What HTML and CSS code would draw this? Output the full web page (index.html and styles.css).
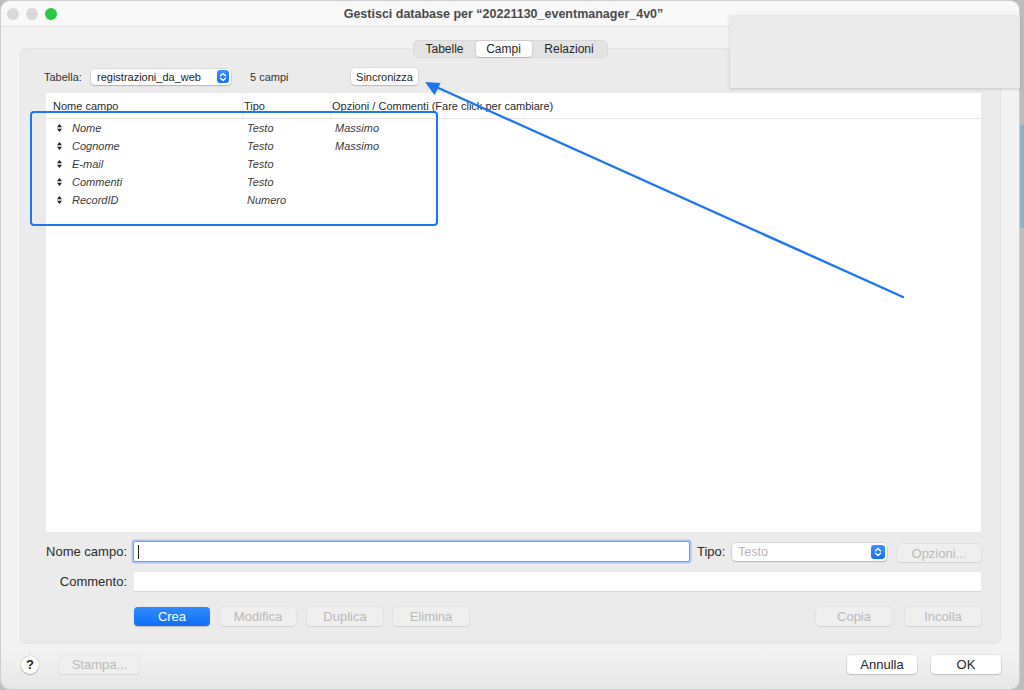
FILE: index.html
```html
<!DOCTYPE html>
<html lang="it">
<head>
<meta charset="utf-8">
<title>Gestisci database</title>
<link rel="stylesheet" href="styles.css">
</head>
<body>
<div class="window">
  <div class="titlebar">
    <div class="lights">
      <span class="light gray"></span>
      <span class="light gray"></span>
      <span class="light green"></span>
    </div>
    <div class="title">Gestisci database per “20221130_eventmanager_4v0”</div>
  </div>
  <div class="content">
    <div class="tabs">
      <span class="tab t1">Tabelle</span>
      <span class="tab t2 sel">Campi</span>
      <span class="tab t3">Relazioni</span>
    </div>
    <div class="panel">
      <div class="toolbar">
        <span class="tlabel">Tabella:</span>
        <div class="popup tpopup">
          <span class="ptext">registrazioni_da_web</span>
          <span class="stepper"><svg width="12" height="12" viewBox="0 0 12 12"><path d="M3.5 4.8 L6 2.5 L8.5 4.8 M3.5 7.2 L6 9.5 L8.5 7.2" fill="none" stroke="#fff" stroke-width="1.4" stroke-linecap="round" stroke-linejoin="round"/></svg></span>
        </div>
        <span class="count">5 campi</span>
        <span class="btn sync">Sincronizza</span>
      </div>
      <div class="table">
        <div class="thead">
          <span class="th c1">Nome campo</span>
          <span class="th c2">Tipo</span>
          <span class="th c3">Opzioni / Commenti (Fare click per cambiare)</span>
        </div>
        <div class="row"><span class="c1 cell"><svg class="grip" width="5" height="8" viewBox="0 0 5 8"><path d="M2.5 0 L5 3.2 L0 3.2 Z M0 4.8 L5 4.8 L2.5 8 Z" fill="#1e1e1e"/></svg>Nome</span><span class="c2 cell">Testo</span><span class="c3 cell">Massimo</span></div>
        <div class="row"><span class="c1 cell"><svg class="grip" width="5" height="8" viewBox="0 0 5 8"><path d="M2.5 0 L5 3.2 L0 3.2 Z M0 4.8 L5 4.8 L2.5 8 Z" fill="#1e1e1e"/></svg>Cognome</span><span class="c2 cell">Testo</span><span class="c3 cell">Massimo</span></div>
        <div class="row"><span class="c1 cell"><svg class="grip" width="5" height="8" viewBox="0 0 5 8"><path d="M2.5 0 L5 3.2 L0 3.2 Z M0 4.8 L5 4.8 L2.5 8 Z" fill="#1e1e1e"/></svg>E-mail</span><span class="c2 cell">Testo</span><span class="c3 cell"></span></div>
        <div class="row"><span class="c1 cell"><svg class="grip" width="5" height="8" viewBox="0 0 5 8"><path d="M2.5 0 L5 3.2 L0 3.2 Z M0 4.8 L5 4.8 L2.5 8 Z" fill="#1e1e1e"/></svg>Commenti</span><span class="c2 cell">Testo</span><span class="c3 cell"></span></div>
        <div class="row"><span class="c1 cell"><svg class="grip" width="5" height="8" viewBox="0 0 5 8"><path d="M2.5 0 L5 3.2 L0 3.2 Z M0 4.8 L5 4.8 L2.5 8 Z" fill="#1e1e1e"/></svg>RecordID</span><span class="c2 cell">Numero</span><span class="c3 cell"></span></div>
      </div>
      <div class="form">
        <span class="flabel">Nome campo:</span>
        <div class="frow">
          <div class="input focus"><span class="caret"></span></div>
          <span class="tipo">Tipo:</span>
          <div class="popup tipopop">
            <span class="ptext ph">Testo</span>
            <span class="stepper"><svg width="12" height="12" viewBox="0 0 12 12"><path d="M3.5 4.8 L6 2.5 L8.5 4.8 M3.5 7.2 L6 9.5 L8.5 7.2" fill="none" stroke="#fff" stroke-width="1.4" stroke-linecap="round" stroke-linejoin="round"/></svg></span>
          </div>
          <span class="btn dis opz">Opzioni...</span>
        </div>
        <span class="flabel">Commento:</span>
        <div class="frow"><div class="input plain"></div></div>
        <span></span>
        <div class="frow actions">
          <span class="btn primary b76">Crea</span>
          <span class="btn dis b76 m10">Modifica</span>
          <span class="btn dis b76 m11">Duplica</span>
          <span class="btn dis b76 m10">Elimina</span>
          <span class="spacer"></span>
          <span class="btn dis b76">Copia</span>
          <span class="btn dis b76 m13">Incolla</span>
        </div>
      </div>
    </div>
    <div class="footer">
      <span class="help">?</span>
      <span class="btn dis stampa">Stampa...</span>
      <span class="spacer"></span>
      <span class="btn b70">Annulla</span>
      <span class="btn b70 m14">OK</span>
    </div>
  </div>
</div>
<div class="redact"></div>
<svg class="annot" width="1024" height="690" viewBox="0 0 1024 690">
  <rect x="31" y="112" width="406" height="113" rx="3" fill="none" stroke="#1b76f2" stroke-width="2"/>
  <line x1="903" y1="297" x2="434" y2="86" stroke="#1b76f2" stroke-width="2.4" stroke-linecap="round"/>
  <path d="M425 82 L440.5 83 L434.6 95.2 Z" fill="#1b76f2"/>
</svg>
</body>
</html>
```

FILE: styles.css
```css
* { box-sizing: border-box; }
html, body { margin: 0; padding: 0; }
body {
  width: 1024px;
  height: 690px;
  overflow: hidden;
  position: relative;
  background: linear-gradient(#bdbdbd 0 125px, #8fb1c7 125px 228px, #bdbdbd 228px);
  font-family: "Liberation Sans", Arial, sans-serif;
  color: #2b2b2b;
}
.window {
  width: 1020px;
  height: 690px;
  border: 1px solid #cdcdcd;
  border-radius: 10px;
  background: linear-gradient(#f3f3f3 0 640px, #f0f0f0 660px, #e6e6e6 100%);
  overflow: hidden;
  display: flex;
  flex-direction: column;
}
.titlebar {
  height: 26px;
  flex: none;
  background: #f8f8f8;
  border-bottom: 1px solid #e0e0e0;
  display: flex;
  align-items: center;
  padding-left: 6px;
}
.lights { display: flex; gap: 7px; width: 57px; }
.light { width: 12px; height: 12px; border-radius: 50%; }
.light.gray { background: #d8d8d8; }
.light.green { background: #2ac840; }
.title {
  flex: 1;
  text-align: center;
  font-size: 12.5px;
  font-weight: bold;
  color: #4a4a4a;
  padding-right: 76px;
}
.content { flex: 1; display: flex; flex-direction: column; }
.tabs {
  align-self: center;
  margin-top: 13px;
  margin-bottom: -10px;
  height: 18px;
  display: flex;
  background: #e3e3e3;
  border: 1px solid #d9d9d9;
  border-radius: 5px;
  position: relative;
  z-index: 1;
  font-size: 12px;
  color: #262626;
}
.tab { display: flex; align-items: center; justify-content: center; height: 16px; }
.t1 { width: 62px; }
.t2 { width: 56px; }
.t3 { width: 75px; }
.tab.sel {
  background: #ffffff;
  border-radius: 4px;
  box-shadow: 0 0 0 0.5px rgba(0,0,0,0.12), 0 1px 1px rgba(0,0,0,0.12);
}
.panel {
  margin: 0 18px 0 19px;
  background: #ebebeb;
  border-radius: 6px;
  padding: 20px 19px 17px 25px;
  border: 1px solid #e4e4e4;
}
.toolbar {
  height: 17px;
  display: flex;
  align-items: center;
  font-size: 11px;
  margin-top: -1px;
}
.tlabel { width: 47px; margin-left: -2px; color: #333; }
.popup {
  height: 16px;
  background: #ffffff;
  border-radius: 4px;
  box-shadow: 0 0 0 0.5px rgba(0,0,0,0.14), 0 1px 1.5px rgba(0,0,0,0.18);
  display: flex;
  align-items: center;
  justify-content: space-between;
  padding: 0 2px 0 6px;
}
.tpopup { width: 140px; font-size: 11px; }
.ptext { color: #222; }
.stepper {
  width: 12px;
  height: 13px;
  border-radius: 3px;
  background: linear-gradient(#3c91fb, #1570f2);
  display: flex;
  align-items: center;
  justify-content: center;
}
.count { width: 120px; padding-left: 19px; color: #333; }
.btn {
  height: 17px;
  background: #ffffff;
  border-radius: 4px;
  box-shadow: 0 0 0 0.5px rgba(0,0,0,0.12), 0 1px 1.5px rgba(0,0,0,0.16);
  display: flex;
  align-items: center;
  justify-content: center;
  color: #262626;
  flex: none;
  white-space: nowrap;
}
.sync { width: 67px; font-size: 11px; }
.table {
  margin-top: 8px;
  height: 439px;
  background: #ffffff;
}
.thead {
  height: 26px;
  display: flex;
  align-items: stretch;
  border-bottom: 1px solid #e6e6e6;
  font-size: 11px;
  color: #2a2a2a;
}
.th { display: flex; align-items: center; }
.thead .c1 { width: 197px; padding-left: 7px; border-right: 1px solid #ececec; }
.thead .c2 { width: 88px; padding-left: 1px; border-right: 1px solid #ececec; }
.thead .c3 { flex: 1; padding-left: 1px; }
.row {
  height: 18px;
  display: flex;
  align-items: center;
  font-size: 11px;
  font-style: italic;
  color: #3a3a3a;
}
.row .c1 { width: 197px; padding-left: 11px; display: flex; align-items: center; }
.grip { margin-right: 10px; }
.row .c2 { width: 88px; padding-left: 4px; }
.row .c3 { flex: 1; padding-left: 4px; }
.form {
  margin-top: 9px;
  display: grid;
  grid-template-columns: 82px 1fr;
  column-gap: 5px;
  align-items: center;
}
.flabel {
  text-align: right;
  font-size: 13px;
  color: #2a2a2a;
  white-space: nowrap;
  padding-right: 1px;
}
.frow { display: flex; align-items: center; }
.form > :nth-child(1), .form > :nth-child(2) { height: 21px; line-height: 21px; }
.form > :nth-child(3), .form > :nth-child(4) { height: 20px; line-height: 20px; margin-top: 10px; }
.form > :nth-child(5), .form > :nth-child(6) { height: 19px; margin-top: 15px; }
.input { background: #ffffff; }
.input.focus {
  flex: 1;
  height: 21px;
  border: 1px solid #6fa0ef;
  box-shadow: 0 0 0 1.5px #a9c6f5;
  border-radius: 2px;
  display: flex;
  align-items: center;
  padding-left: 4px;
}
.caret { width: 1px; height: 14px; background: #222; }
.input.plain {
  flex: 1;
  height: 20px;
  margin-left: 1px;
  border-bottom: 1px solid #d4d4d4;
}
.tipo { width: 30px; margin-left: 7px; font-size: 13px; color: #2a2a2a; }
.tipopop { width: 155px; height: 18px; margin-left: 5px; font-size: 12.5px; padding-right: 2px; line-height: normal; }
.ptext.ph { color: #b4b4b4; }
.tipopop .stepper { width: 14px; height: 14px; }
.dis {
  background: #efefef;
  color: #b8b8b8;
  box-shadow: 0 0 0 0.5px rgba(0,0,0,0.05), 0 0.5px 1px rgba(0,0,0,0.08);
}
.opz { width: 84px; height: 18px; margin-left: 10px; font-size: 13px; margin-top: 3px; line-height: normal; }
.actions { align-items: stretch; }
.actions .btn { height: 19px; font-size: 13px; }
.b76 { width: 76px; }
.m10 { margin-left: 10px; }
.m11 { margin-left: 11px; }
.m13 { margin-left: 13px; }
.m14 { margin-left: 14px; }
.primary {
  background: linear-gradient(#2f8cfc, #0f6ff5);
  color: #ffffff;
  box-shadow: 0 0.5px 1px rgba(0,0,0,0.2);
  margin-left: 1px;
}
.spacer { flex: 1; }
.footer {
  margin-top: 11px;
  height: 19px;
  display: flex;
  align-items: center;
  padding: 0 18px 0 20px;
  font-size: 13px;
}
.help {
  width: 18px;
  height: 18px;
  border-radius: 50%;
  background: #ffffff;
  box-shadow: 0 0 0 0.5px rgba(0,0,0,0.15), 0 1px 1.5px rgba(0,0,0,0.2);
  display: flex;
  align-items: center;
  justify-content: center;
  font-weight: bold;
  font-size: 13px;
  color: #222;
}
.stampa { width: 81px; height: 19px; margin-left: 20px; }
.b70 { width: 70px; height: 19px; }
.redact {
  position: absolute;
  left: 730px;
  top: 15px;
  width: 290px;
  height: 73px;
  background: #ebebeb;
  box-shadow: 0 1px 3px rgba(0,0,0,0.18);
}
.annot { position: absolute; left: 0; top: 0; pointer-events: none; }
```
